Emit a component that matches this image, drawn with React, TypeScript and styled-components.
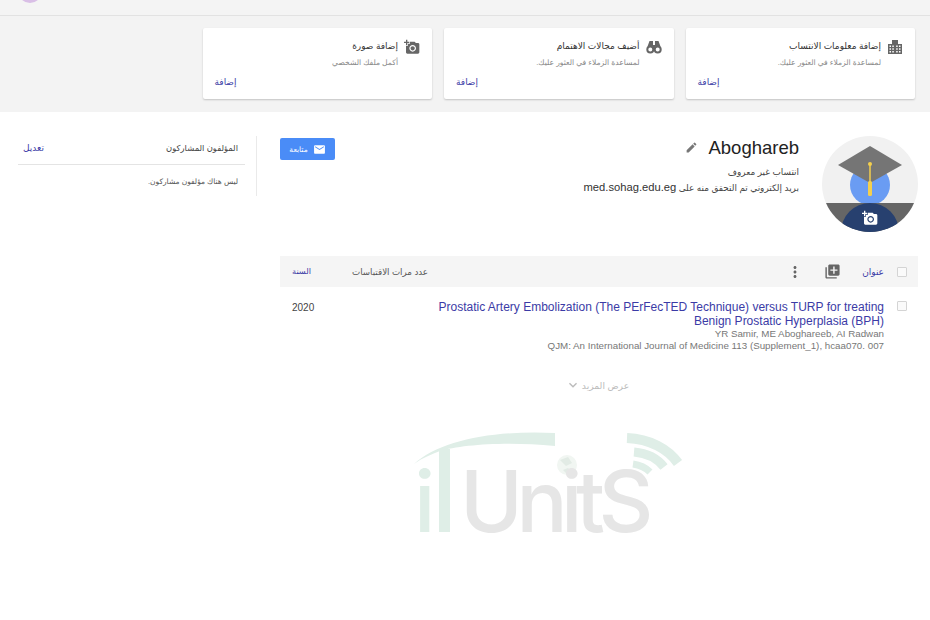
import { FC, ReactNode } from "react";
import styled, { createGlobalStyle } from "styled-components";
import {
  MdAddAPhoto,
  MdEdit,
  MdEmail,
  MdExpandMore,
  MdLibraryAdd,
  MdMoreVert,
} from "react-icons/md";

const GlobalStyle = createGlobalStyle`
  html, body {
    margin: 0;
    padding: 0;
    background: #fff;
    overflow: hidden;
  }
  * {
    box-sizing: border-box;
  }
  body {
    font-family: "Liberation Sans", "DejaVu Sans", sans-serif;
    color: #222;
  }
`;

const Page = styled.div`
  position: relative;
  width: 930px;
  height: 620px;
  overflow: hidden;
  direction: rtl;
`;

const TopBar = styled.header`
  height: 16px;
  background: #f4f4f4;
  border-bottom: 1px solid #e2e2e2;
  display: flex;
  justify-content: flex-end;
  padding-left: 18px;
  overflow: hidden;
`;

const UserDot = styled.div`
  width: 24px;
  height: 24px;
  margin-top: -21px;
  border-radius: 50%;
  background: #d9bfe6;
`;

const Banner = styled.section`
  height: 96px;
  background: #f3f3f3;
  display: flex;
  gap: 12px;
  padding: 12px 15px 0;
`;

const Card = styled.div`
  width: 229.5px;
  height: 71px;
  background: #fff;
  border-radius: 2px;
  box-shadow: 0 1px 2px rgba(0, 0, 0, 0.2);
  padding: 11px 12px 0;
  display: flex;
  flex-direction: column;
`;

const CardHead = styled.div`
  display: flex;
  gap: 6px;
  height: 31px;
`;

const CardIcon = styled.span`
  width: 16px;
  height: 16px;
  color: #666;
  flex-shrink: 0;
  font-size: 16px;
  svg {
    display: block;
  }
`;

const CardTitle = styled.div`
  font-size: 9px;
  line-height: 15px;
  color: #333;
`;

const CardText = styled.div`
  font-size: 7.6px;
  line-height: 15px;
  color: #888;
  margin-top: 1px;
`;

const LinkText = styled.a`
  font-size: 9px;
  color: #3b3ba6;
  line-height: 14px;
`;

const CardLink = styled(LinkText)`
  margin-top: 5px;
  align-self: flex-end;
`;

const Content = styled.div`
  display: flex;
  padding: 24px 12px 0 0;
`;

const Main = styled.main`
  width: 638px;
  flex-shrink: 0;
`;

const ProfileHead = styled.div`
  display: flex;
  height: 120px;
`;

const Avatar = styled.div`
  position: relative;
  width: 96px;
  height: 96px;
  flex-shrink: 0;
  svg {
    display: block;
  }
`;

const AvatarCamera = styled(MdAddAPhoto)`
  position: absolute;
  left: 40px;
  top: 74px;
  color: #fff;
  font-size: 16px;
`;

const Info = styled.div`
  flex: 1;
  padding-right: 23px;
`;

const NameRow = styled.div`
  display: flex;
  align-items: center;
  gap: 10px;
  height: 23px;
  margin-bottom: 6px;
`;

const Name = styled.h1`
  margin: 0;
  font-size: 18.5px;
  font-weight: 400;
  color: #222;
`;

const EditIcon = styled(MdEdit)`
  color: #777;
  font-size: 13px;
`;

const InfoLine = styled.div`
  font-size: 8.9px;
  line-height: 15px;
  color: #444;
`;

const Domain = styled.span`
  font-size: 11.2px;
  color: #333;
`;

const FollowCol = styled.div`
  padding-top: 2px;
`;

const FollowButton = styled.button`
  direction: rtl;
  width: 55px;
  height: 22px;
  border: none;
  border-radius: 2px;
  background: #4a8cf7;
  color: #fff;
  font-family: inherit;
  font-size: 7.5px;
  display: flex;
  align-items: center;
  justify-content: center;
  gap: 5px;
  padding: 0;
  svg {
    font-size: 13px;
  }
`;

const Table = styled.div`
  font-size: 10px;
`;

const HeadRow = styled.div`
  display: grid;
  grid-template-columns: 34px 1fr 106px 42px;
  align-items: center;
  height: 31px;
  background: #f5f5f5;
`;

const BodyRow = styled.div`
  display: grid;
  grid-template-columns: 34px 1fr 106px 42px;
  padding-top: 13px;
`;

const CheckCell = styled.div<{ $top?: number }>`
  padding-right: 11px;
  padding-top: ${(p) => p.$top ?? 0}px;
`;

const CheckBox = styled.div`
  width: 10px;
  height: 10px;
  border: 1px solid #d4d4d4;
  border-radius: 1px;
  background: #fafafa;
`;

const TitleHead = styled.div`
  display: flex;
  align-items: center;
  svg {
    display: block;
  }
`;

const HeadIcon = styled.span<{ $gap: number; $size: number }>`
  display: flex;
  margin-right: ${(p) => p.$gap}px;
  font-size: ${(p) => p.$size}px;
  color: #666;
`;

const CitedHead = styled.div`
  font-size: 8.7px;
  color: #555;
`;

const YearCell = styled.div`
  padding-left: 12px;
  text-align: left;
`;

const YearLink = styled(LinkText)`
  font-size: 8.2px;
`;

const YearText = styled.span`
  font-size: 10px;
  line-height: 16px;
  color: #444;
`;

const Paper = styled.div`
  direction: ltr;
  text-align: right;
`;

const PaperTitle = styled.a`
  display: block;
  font-size: 12px;
  line-height: 14px;
  color: #3b3ba6;
`;

const PaperMeta = styled.div`
  font-size: 9.77px;
  line-height: 12px;
  color: #777;
`;

const ShowMore = styled.div`
  margin-top: 25px;
  padding-right: 4px;
  display: flex;
  justify-content: center;
  align-items: center;
  gap: 1px;
  font-size: 9.2px;
  color: #bbb;
  svg {
    font-size: 16px;
  }
`;

const Aside = styled.aside`
  width: 239px;
  height: 60px;
  margin-right: 23px;
  border-right: 1px solid #eaeaea;
`;

const AsideHead = styled.div`
  display: flex;
  justify-content: space-between;
  align-items: center;
  height: 29px;
  margin: 0 11px 0 0;
  padding: 0 7px 4px 5px;
  border-bottom: 1px solid #e4e4e4;
  font-size: 8.4px;
  color: #444;
`;

const AsideText = styled.div`
  font-size: 7.5px;
  line-height: 14px;
  color: #555;
  padding: 10px 18px 0 0;
`;

const Watermark = styled.div`
  position: absolute;
  left: 410px;
  top: 425px;
  width: 280px;
  height: 120px;
  direction: ltr;
  pointer-events: none;
`;

const WatermarkArt = styled.svg`
  position: absolute;
  inset: 0;
`;

const WatermarkText = styled.span<{ $left: number; $color: string }>`
  position: absolute;
  left: ${(p) => p.$left}px;
  top: 27px;
  font-family: "Inter", "Liberation Sans", sans-serif;
  font-size: 85px;
  line-height: 100px;
  font-weight: 500;
  letter-spacing: -6.5px;
  color: ${(p) => p.$color};
`;

const BuildingIcon = () => (
  <svg width="16" height="16" viewBox="0 0 16 16" fill="currentColor">
    <path
      fillRule="evenodd"
      d="M5 1h6v4h4v10H1V5h4zM2.500 6.500v1.500H4V6.500zM5.300 6.500v1.500h1.500V6.500zM9.200 6.500v1.500h1.500V6.500zM12 6.500v1.500h1.500V6.500zM2.500 9.200v1.500H4V9.200zM5.300 9.200v1.500h1.500V9.200zM9.200 9.200v1.500h1.500V9.200zM12 9.200v1.500h1.500V9.200zM2.500 12v1.500H4V12zM5.300 12v1.500h1.500V12zM9.200 12v1.500h1.500V12zM12 12v1.500h1.500V12z"
    />
  </svg>
);

const BinocularsIcon = () => (
  <svg width="16" height="16" viewBox="0 0 16 16" fill="currentColor">
    <path d="M3.500 2h3.500v5.500H1.500zM9 2h3.500l2 5.500H9z" />
    <path d="M7 6h2v3H7z" />
    <circle cx="4.300" cy="10.500" r="3" fill="none" stroke="currentColor" strokeWidth="2" />
    <circle cx="11.700" cy="10.500" r="3" fill="none" stroke="currentColor" strokeWidth="2" />
  </svg>
);

const AvatarArt = () => (
  <svg width="96" height="96" viewBox="0 0 96 96">
    <defs>
      <clipPath id="avatarClip">
        <circle cx="48" cy="48" r="48" />
      </clipPath>
    </defs>
    <g clipPath="url(#avatarClip)">
      <rect width="96" height="96" fill="#f1f1f1" />
      <circle cx="48" cy="49" r="20" fill="#6a9cf3" />
      <rect y="67" width="96" height="29" fill="#666" />
      <ellipse cx="48" cy="96" rx="29" ry="29" fill="#27406f" />
      <path d="M48 10 80 29 48 47 16 29z" fill="#757575" />
      <path d="M48 28v20" stroke="#f4cf4d" strokeWidth="1.500" />
      <circle cx="48" cy="28" r="2" fill="#f4cf4d" />
      <rect x="46" y="45" width="4" height="15" rx="1.500" fill="#f4cf4d" />
    </g>
  </svg>
);

const LogoArt = () => (
  <WatermarkArt viewBox="0 0 280 120">
    <path d="M4 39C30 15 85 5 145 8v13C95 16 50 20 30 26c-8 3-18 7-26 13z" fill="#dfeee7" />
    <rect x="29" y="24" width="11" height="83" fill="#dfeee7" />
    <g fill="none" stroke="#dfeee7" strokeLinecap="butt">
      <path d="M217 13c23 1 41 11 51 25" strokeWidth="10" />
      <path d="M224 27c12 1 23 6 30 15" strokeWidth="9" />
      <path d="M223 39c7 1 13 4 17 8" strokeWidth="7" />
    </g>
    <circle cx="157" cy="40" r="10" fill="#f1f6f2" />
    <path d="M150 35l8-3 4 6-6 3zM153 45l5-2 3 3-5 2z" fill="#e2ebe5" />
  </WatermarkArt>
);

const cards: { icon: ReactNode; title: string; text: string }[] = [
  {
    icon: <BuildingIcon />,
    title: "إضافة معلومات الانتساب",
    text: "لمساعدة الزملاء في العثور عليك.",
  },
  {
    icon: <BinocularsIcon />,
    title: "أضيف مجالات الاهتمام",
    text: "لمساعدة الزملاء في العثور عليك.",
  },
  {
    icon: <MdAddAPhoto />,
    title: "إضافة صورة",
    text: "أكمل ملفك الشخصي",
  },
];

const App: FC = () => {
  return (
    <Page>
      <GlobalStyle />
      <TopBar>
        <UserDot />
      </TopBar>
      <Banner>
        {cards.map((c) => (
          <Card key={c.title}>
            <CardHead>
              <CardIcon>{c.icon}</CardIcon>
              <div>
                <CardTitle>{c.title}</CardTitle>
                <CardText>{c.text}</CardText>
              </div>
            </CardHead>
            <CardLink>إضافة</CardLink>
          </Card>
        ))}
      </Banner>
      <Content>
        <Main>
          <ProfileHead>
            <Avatar>
              <AvatarArt />
              <AvatarCamera />
            </Avatar>
            <Info>
              <NameRow>
                <Name>Aboghareb</Name>
                <EditIcon />
              </NameRow>
              <InfoLine>انتساب غير معروف</InfoLine>
              <InfoLine>
                بريد إلكتروني تم التحقق منه على <Domain>med.sohag.edu.eg</Domain>
              </InfoLine>
            </Info>
            <FollowCol>
              <FollowButton>
                <MdEmail />
                متابعة
              </FollowButton>
            </FollowCol>
          </ProfileHead>
          <Table>
            <HeadRow>
              <CheckCell>
                <CheckBox />
              </CheckCell>
              <TitleHead>
                <LinkText>عنوان</LinkText>
                <HeadIcon $gap={21} $size={17}>
                  <MdLibraryAdd />
                </HeadIcon>
                <HeadIcon $gap={20} $size={18}>
                  <MdMoreVert />
                </HeadIcon>
              </TitleHead>
              <CitedHead>عدد مرات الاقتباسات</CitedHead>
              <YearCell>
                <YearLink>السنة</YearLink>
              </YearCell>
            </HeadRow>
            <BodyRow>
              <CheckCell $top={1}>
                <CheckBox />
              </CheckCell>
              <Paper>
                <PaperTitle>
                  Prostatic Artery Embolization (The PErFecTED Technique) versus TURP for treating Benign
                  Prostatic Hyperplasia (BPH)
                </PaperTitle>
                <PaperMeta>YR Samir, ME Aboghareeb, AI Radwan</PaperMeta>
                <PaperMeta>QJM: An International Journal of Medicine 113 (Supplement_1), hcaa070. 007</PaperMeta>
              </Paper>
              <div />
              <YearCell>
                <YearText>2020</YearText>
              </YearCell>
            </BodyRow>
            <ShowMore>
              عرض المزيد
              <MdExpandMore />
            </ShowMore>
          </Table>
        </Main>
        <Aside>
          <AsideHead>
            <span>المؤلفون المشاركون</span>
            <LinkText>تعديل</LinkText>
          </AsideHead>
          <AsideText>ليس هناك مؤلفون مشاركون.</AsideText>
        </Aside>
      </Content>
      <Watermark>
        <LogoArt />
        <WatermarkText $left={4} $color="#dfeee7">
          i
        </WatermarkText>
        <WatermarkText $left={50} $color="#e6e6e6">
          UnitS
        </WatermarkText>
      </Watermark>
    </Page>
  );
};

export default App;
